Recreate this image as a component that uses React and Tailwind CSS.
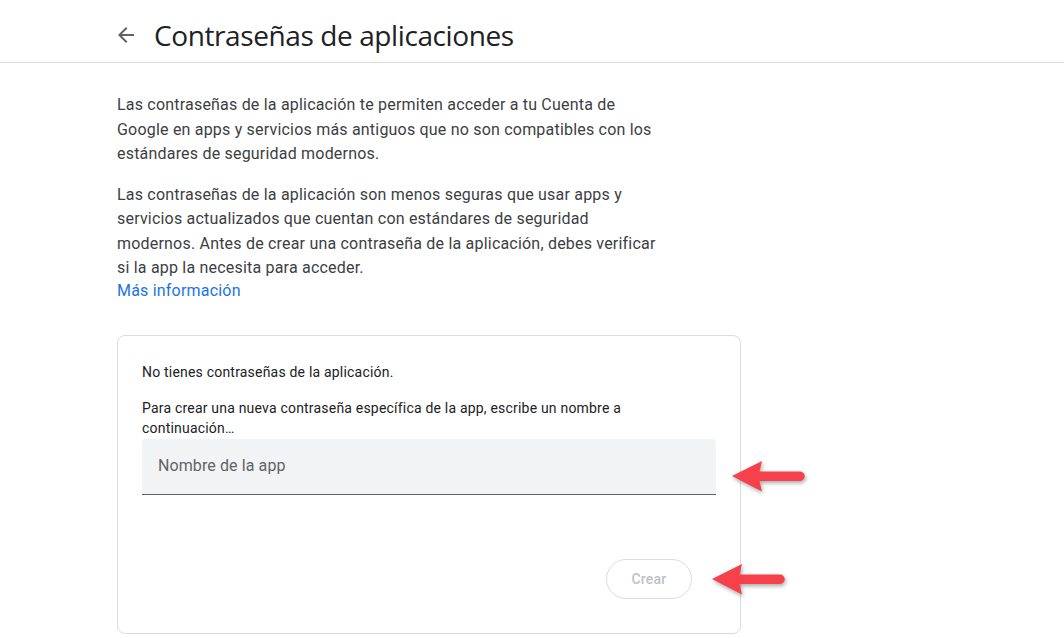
import React from 'react'

const RedArrow = ({ className }) => (
  <svg
    viewBox="0 0 76 36"
    className={`absolute w-[76px] h-[36px] drop-shadow-[1px_2px_2px_rgba(0,0,0,0.35)] ${className}`}
  >
    <path
      d="M1 16 L31 1 L28.5 11.5 L69 11.5 A4.75 4.75 0 0 1 69 21 L28.5 21 L31 31.5 Z"
      fill="#f6404a"
    />
  </svg>
);

export default function App() {
  return (
    <div className="min-h-screen bg-white font-['Roboto',sans-serif] text-[#3c4043]">
      <header className="h-[63px] border-b border-[#dadce0] flex items-center pl-[114px] pt-2">
        <button className="w-6 h-6 flex items-center justify-center text-[#5f6368]">
          <svg viewBox="0 0 24 24" className="w-6 h-6" fill="currentColor">
            <path d="M20 11H7.83l5.59-5.59L12 4l-8 8 8 8 1.41-1.41L7.83 13H20v-2z" />
          </svg>
        </button>
        <h1 className="ml-4 text-[28px] leading-9 text-[#202124] font-['Open_Sans',sans-serif] tracking-[-0.4px]">
          Contraseñas de aplicaciones
        </h1>
      </header>

      <main className="pl-[117px] pt-[30px]">
        <p className="w-[545px] text-base leading-[24.5px] tracking-[0.2px] mb-4">
          Las contraseñas de la aplicación te permiten acceder a tu Cuenta de Google en apps y servicios más antiguos que no son compatibles con los estándares de seguridad modernos.
        </p>
        <p className="w-[545px] text-base leading-[24.5px] tracking-[0.2px]">
          Las contraseñas de la aplicación son menos seguras que usar apps y servicios actualizados que cuentan con estándares de seguridad modernos. Antes de crear una contraseña de la aplicación, debes verificar si la app la necesita para acceder.
        </p>
        <a href="#" className="block text-base leading-5 tracking-[0.2px] text-[#1a73e8]">Más información</a>

        <div className="relative mt-[34px] w-[624px] h-[299px] border border-[#dadce0] rounded-lg px-6 pt-[26px]">
          <p className="text-sm leading-5 tracking-[0.2px] text-[#202124]">No tienes contraseñas de la aplicación.</p>
          <p className="mt-4 max-w-[540px] text-sm leading-5 tracking-[0.2px] text-[#202124]">
            Para crear una nueva contraseña específica de la app, escribe un nombre a continuación…
          </p>
          <div className="mt-px h-[56px] bg-[#f1f3f4] border-b border-[#5f6368] rounded-t flex items-center px-4">
            <span className="text-base tracking-[0.1px] text-[#5f6368]">Nombre de la app</span>
          </div>
          <div className="flex justify-end mt-16 pr-[24px]">
            <button className="w-[86px] h-10 rounded-full border border-[#dadce0] text-sm font-medium tracking-[0.2px] text-[#bdc1c6]">
              Crear
            </button>
          </div>
          <RedArrow className="left-[613px] top-[124px]" />
          <RedArrow className="left-[593px] top-[227px]" />
        </div>
      </main>
    </div>
  );
}
